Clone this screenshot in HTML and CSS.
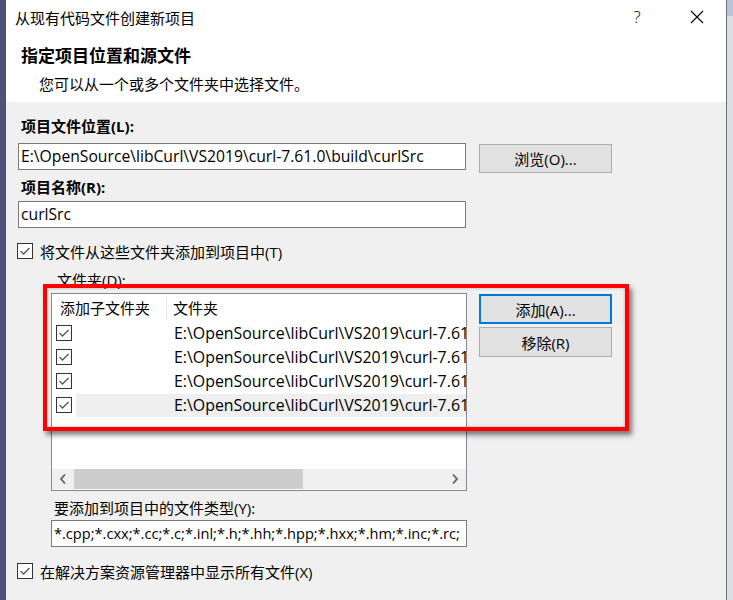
FILE: index.html
```html
<!DOCTYPE html>
<html lang="zh-CN">
<head>
<meta charset="utf-8">
<title>从现有代码文件创建新项目</title>
<link rel="stylesheet" href="styles.css">
</head>
<body>
<div class="screen">
  <div class="edge-left"></div>
  <div class="dialog">
    <header class="top">
      <div class="titlebar">
        <span class="title">从现有代码文件创建新项目</span>
        <span class="help">?</span>
        <span class="close"><svg width="14" height="14" viewBox="0 0 14 14"><path d="M1 1 L13 13 M13 1 L1 13" stroke="#000" stroke-width="1.1" fill="none"/></svg></span>
      </div>
      <h1 class="heading">指定项目位置和源文件</h1>
      <p class="sub">您可以从一个或多个文件夹中选择文件。</p>
    </header>
    <main class="body">
      <div class="lbl bold">项目文件位置(L):</div>
      <div class="row">
        <div class="input wide">E:\OpenSource\libCurl\VS2019\curl-7.61.0\build\curlSrc</div>
        <div class="btn">浏览(O)...</div>
      </div>
      <div class="lbl bold gap4">项目名称(R):</div>
      <div class="input wide gap4">curlSrc</div>
      <div class="check first">
        <svg class="cb" width="16" height="16" viewBox="0 0 16 16"><rect x="0.5" y="0.5" width="15" height="15" fill="#fff" stroke="#333"/><path d="M3.5 8 L6.5 11 L12.5 5" stroke="#555" stroke-width="1.3" fill="none"/></svg>
        <span>将文件从这些文件夹添加到项目中(T)</span>
      </div>
      <div class="indent">
        <div class="lbl2 folder">文件夹(D):</div>
        <div class="listrow">
          <div class="listbox">
            <div class="lhead">
              <div class="hcol1">添加子文件夹</div>
              <div class="hcol2">文件夹</div>
            </div>
            <div class="lrow">
              <div class="c1"><svg class="cb" width="16" height="16" viewBox="0 0 16 16"><rect x="0.5" y="0.5" width="15" height="15" fill="#fff" stroke="#333"/><path d="M3.5 8 L6.5 11 L12.5 5" stroke="#555" stroke-width="1.3" fill="none"/></svg></div>
              <div class="c2">E:\OpenSource\libCurl\VS2019\curl-7.61</div>
            </div>
            <div class="lrow">
              <div class="c1"><svg class="cb" width="16" height="16" viewBox="0 0 16 16"><rect x="0.5" y="0.5" width="15" height="15" fill="#fff" stroke="#333"/><path d="M3.5 8 L6.5 11 L12.5 5" stroke="#555" stroke-width="1.3" fill="none"/></svg></div>
              <div class="c2">E:\OpenSource\libCurl\VS2019\curl-7.61</div>
            </div>
            <div class="lrow">
              <div class="c1"><svg class="cb" width="16" height="16" viewBox="0 0 16 16"><rect x="0.5" y="0.5" width="15" height="15" fill="#fff" stroke="#333"/><path d="M3.5 8 L6.5 11 L12.5 5" stroke="#555" stroke-width="1.3" fill="none"/></svg></div>
              <div class="c2">E:\OpenSource\libCurl\VS2019\curl-7.61</div>
            </div>
            <div class="lrow sel">
              <div class="c1"><svg class="cb" width="16" height="16" viewBox="0 0 16 16"><rect x="0.5" y="0.5" width="15" height="15" fill="#fff" stroke="#333"/><path d="M3.5 8 L6.5 11 L12.5 5" stroke="#555" stroke-width="1.3" fill="none"/></svg></div>
              <div class="c2">E:\OpenSource\libCurl\VS2019\curl-7.61</div>
            </div>
            <div class="lfill"></div>
            <div class="hscroll">
              <div class="arrow"><svg width="8" height="12" viewBox="0 0 8 12"><path d="M6 1.5 L2 6 L6 10.5" stroke="#606060" stroke-width="1.8" fill="none"/></svg></div>
              <div class="thumb"></div>
              <div class="track"></div>
              <div class="arrow"><svg width="8" height="12" viewBox="0 0 8 12"><path d="M2 1.5 L6 6 L2 10.5" stroke="#606060" stroke-width="1.8" fill="none"/></svg></div>
            </div>
          </div>
          <div class="btncol">
            <div class="btn primary">添加(A)...</div>
            <div class="btn">移除(R)</div>
          </div>
        </div>
        <div class="lbl2 types">要添加到项目中的文件类型(Y):</div>
        <div class="input narrow">*.cpp;*.cxx;*.cc;*.c;*.inl;*.h;*.hh;*.hpp;*.hxx;*.hm;*.inc;*.rc;</div>
      </div>
      <div class="check second">
        <svg class="cb" width="16" height="16" viewBox="0 0 16 16"><rect x="0.5" y="0.5" width="15" height="15" fill="#fff" stroke="#333"/><path d="M3.5 8 L6.5 11 L12.5 5" stroke="#555" stroke-width="1.3" fill="none"/></svg>
        <span>在解决方案资源管理器中显示所有文件(X)</span>
      </div>
      <div class="redbox"></div>
    </main>
  </div>
  <div class="edge-right"></div>
</div>
</body>
</html>
```

FILE: styles.css
```css
html, body {
  margin: 0;
  padding: 0;
}
body {
  font-family: "Open Sans", "Noto Sans CJK SC", sans-serif;
  font-size: 15px;
  color: #000;
  background: #f0f0f0;
}
.screen {
  display: flex;
  width: 733px;
  height: 600px;
  overflow: hidden;
}
.edge-left {
  width: 6px;
  flex: none;
  background: #4e527a;
}
.dialog {
  width: 720px;
  flex: none;
  display: flex;
  flex-direction: column;
  background: #f0f0f0;
}
.edge-right {
  flex: 1;
  border-left: 1px solid #707070;
  background: linear-gradient(#b9c3d6 0 16px, #dcdfe6 16px);
}
.top {
  background: #fff;
  height: 102px;
  flex: none;
}
.titlebar {
  height: 34px;
  display: flex;
  align-items: center;
  padding-left: 9px;
}
.title {
  flex: 1;
}
.help {
  width: 46px;
  text-align: center;
  font-size: 17px;
  font-weight: 300;
  line-height: 20px;
}
.close {
  width: 46px;
  margin: 0 6px 0 14px;
  display: flex;
  justify-content: center;
}
.heading {
  margin: 10px 0 0 15px;
  font-size: 17px;
  font-weight: bold;
  line-height: 24px;
}
.sub {
  margin: 6px 0 0 33px;
  line-height: 20px;
}
.body {
  position: relative;
  flex: 1;
  padding: 14px 0 0 12px;
}
.lbl {
  line-height: 20px;
  padding-left: 3px;
}
.bold {
  font-weight: bold;
}
.gap4 {
  margin-top: 4px;
}
.row {
  display: flex;
  align-items: flex-start;
  height: 30px;
  margin-top: 7px;
}
.input {
  box-sizing: border-box;
  height: 27px;
  border: 1px solid #7a7a7a;
  background: #fff;
  padding: 0 2px;
  font-size: 15.7px;
  line-height: 24px;
  white-space: nowrap;
  overflow: hidden;
}
.wide {
  width: 448px;
}
.narrow {
  width: 416px;
  margin-top: 2px;
  font-size: 14.6px;
}
.btn {
  box-sizing: border-box;
  width: 133px;
  height: 29px;
  margin-left: 13px;
  margin-top: 1px;
  background: #e1e1e1;
  border: 1px solid #adadad;
  display: flex;
  align-items: center;
  justify-content: center;
}
.check {
  display: flex;
  align-items: center;
  height: 20px;
  gap: 7px;
  margin-left: -1px;
}
.check.first {
  margin-top: 13px;
}
.check.second {
  margin-top: 14px;
}
.cb {
  display: block;
  flex: none;
}
.indent {
  padding-left: 33px;
}
.lbl2 {
  line-height: 20px;
}
.folder {
  margin-top: 9px;
  padding-left: 6px;
}
.types {
  margin-top: 7px;
  padding-left: 3px;
}
.listrow {
  display: flex;
  align-items: flex-start;
  margin-top: 3px;
}
.listbox {
  box-sizing: border-box;
  width: 416px;
  height: 198px;
  border: 1px solid #828790;
  background: #fff;
  display: flex;
  flex-direction: column;
  overflow: hidden;
}
.lhead {
  height: 27px;
  display: flex;
  align-items: center;
  flex: none;
}
.hcol1 {
  box-sizing: border-box;
  width: 115px;
  height: 24px;
  line-height: 24px;
  padding-left: 8px;
  border-right: 1px solid #e5e5e5;
}
.hcol2 {
  padding-left: 6px;
}
.lrow {
  height: 24px;
  display: flex;
  align-items: center;
  flex: none;
}
.c1 {
  width: 24px;
  height: 24px;
  display: flex;
  align-items: center;
  padding-left: 4px;
  box-sizing: border-box;
}
.c2 {
  flex: 1;
  height: 23px;
  line-height: 23px;
  padding-left: 98px;
  font-size: 15.9px;
  white-space: nowrap;
  overflow: hidden;
}
.sel .c2 {
  background: #efefef;
}
.lfill {
  flex: 1;
}
.hscroll {
  height: 20px;
  margin-bottom: 1px;
  display: flex;
  background: #f0f0f0;
  flex: none;
}
.arrow {
  width: 22px;
  display: flex;
  align-items: center;
  justify-content: center;
}
.thumb {
  width: 229px;
  background: #cdcdcd;
}
.track {
  flex: 1;
}
.btncol {
  display: flex;
  flex-direction: column;
  gap: 3px;
  margin-left: 12px;
}
.btncol .btn {
  margin: 0;
  height: 30px;
}
.btncol .btn.primary {
  margin-top: 1px;
  border: 2px solid #0078d7;
}
.redbox {
  position: absolute;
  left: 37px;
  top: 182px;
  width: 586px;
  height: 147px;
  box-sizing: border-box;
  border: 4px solid #ff0000;
  box-shadow: 3px 4px 5px rgba(0, 0, 0, 0.5), inset 0 0 3px rgba(0, 0, 0, 0.3);
  pointer-events: none;
}
```
